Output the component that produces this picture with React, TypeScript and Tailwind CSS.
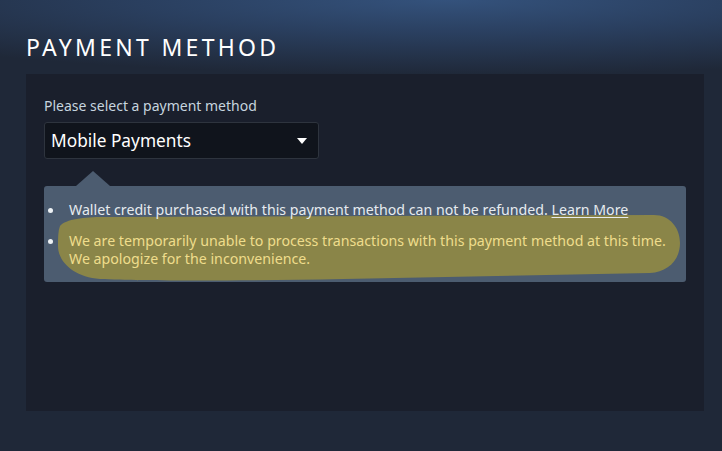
export default function App() {
  return (
    <div
      className="min-h-screen w-full bg-[#1f2838] bg-[radial-gradient(ellipse_95%_75px_at_62%_0%,#34527c_0%,#2a3f5f_45%,#1f2838_100%)] px-[26px] pt-[30px] font-['Noto_Sans',sans-serif]"
    >
      <h1 className="text-[23px] font-normal uppercase leading-[34px] tracking-[3.3px] text-white">
        Payment Method
      </h1>

      <div className="mt-[10px] h-[337px] w-[678px] bg-[#1a1f2c] px-[18px] pt-[23px]">
        <label className="block text-[14px] leading-[18px] text-[#c6d4df]">
          Please select a payment method
        </label>

        {/* dropdown */}
        <div className="mt-[7px] flex h-[37px] w-[275px] items-center justify-between rounded-[3px] border border-[#2e343e] bg-[#10141c] pl-[6px] pr-[11px]">
          <span className="text-[17.3px] leading-none text-white">Mobile Payments</span>
          <svg width="10" height="6" viewBox="0 0 10 6">
            <path d="M0 0 H10 L5 6 Z" fill="#ffffff" />
          </svg>
        </div>

        {/* notice box */}
        <div className="relative mt-[27px] w-[642px] rounded-[3px] bg-[#4c5c70] pb-[14px] pl-[4px] pt-[15px] text-[14.2px] leading-[18px]">
          <div className="absolute -top-[15px] left-[32px] h-0 w-0 border-x-[17px] border-b-[15px] border-x-transparent border-b-[#4c5c70]" />

          {/* marker highlight */}
          <svg
            className="absolute left-0 top-0"
            width="642"
            height="96"
            viewBox="0 0 642 96"
          >
            <path
              d="M16 40 C22 33 40 31 60 31 L610 29 C626 29 636 42 636 57 C636 74 624 86 606 87 L300 93 C200 95 100 95 56 93 C30 91 14 76 14 60 C14 52 14 45 16 40 Z"
              fill="#8a8548"
            />
          </svg>

          <div className="relative flex gap-[16px]">
            <span className="mt-[7px] h-[5px] w-[5px] shrink-0 rounded-full bg-[#eef2f5]" />
            <p className="text-[#e6ebef]">
              Wallet credit purchased with this payment method can not be refunded.{" "}
              <span className="underline underline-offset-2">Learn More</span>
            </p>
          </div>
          <div className="relative mt-[13px] flex gap-[16px]">
            <span className="mt-[7px] h-[5px] w-[5px] shrink-0 rounded-full bg-[#eef2f5]" />
            <p className="text-[#efdd8c]">
              We are temporarily unable to process transactions with this payment method at this time.
              <br />
              We apologize for the inconvenience.
            </p>
          </div>
        </div>
      </div>
    </div>
  );
}
